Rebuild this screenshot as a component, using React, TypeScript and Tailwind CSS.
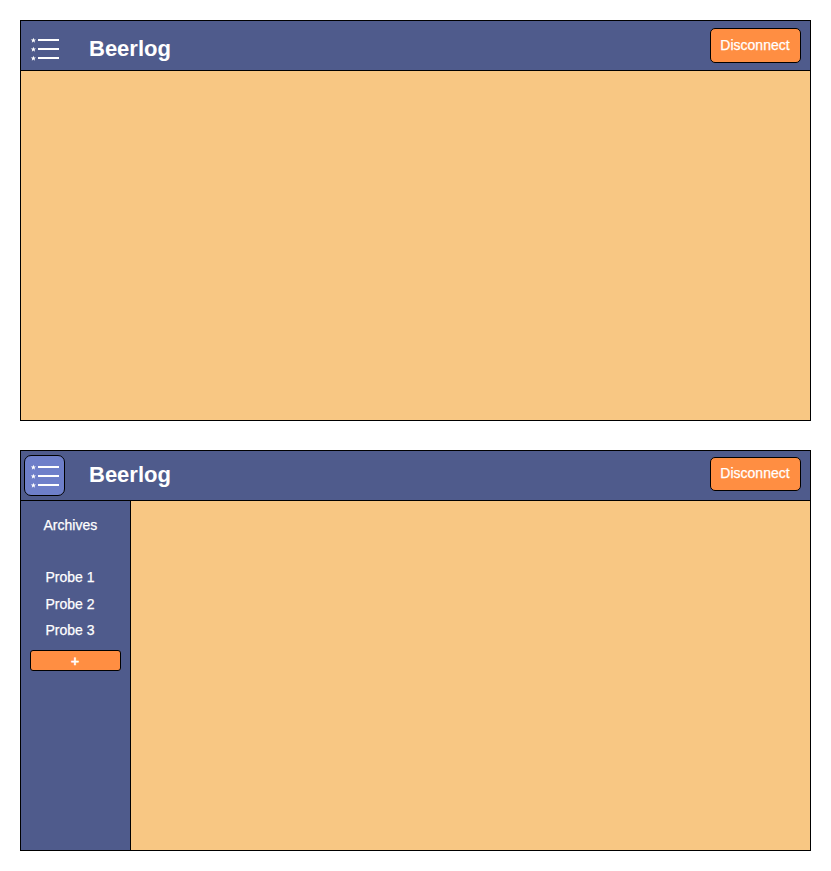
import React from "react";

const STAR = "M0 -2.7 L0.7 -0.85 L2.6 -0.8 L1.1 0.4 L1.6 2.3 L0 1.2 L-1.6 2.3 L-1.1 0.4 L-2.6 -0.8 L-0.7 -0.85 Z";

function ListIcon() {
  return (
    <svg width="29" height="25" viewBox="0 0 29 25" className="block shrink-0" fill="white" aria-hidden="true">
      {[3, 12, 21].map((y) => (
        <g key={y}>
          <path d={STAR} transform={`translate(3.4 ${y + 0.4})`} />
          <rect x="8" y={y - 1} width="21" height="2" />
        </g>
      ))}
    </svg>
  );
}

function MenuButton({ active = false }: { active?: boolean }) {
  return (
    <button
      aria-label="Menu"
      className={`mt-1 ml-[3px] flex h-[41px] w-[41px] items-start rounded-[7px] border pl-[5px] ${
        active ? "border-black bg-[#6e7fc9] pt-[7.5px]" : "border-transparent pt-[11px]"
      }`}
    >
      <ListIcon />
    </button>
  );
}

function Header({ open = false }: { open?: boolean }) {
  return (
    <header className="flex h-[50px] shrink-0 items-start border-b border-black bg-[#4f5b8c]">
      <MenuButton active={open} />
      <h1 className={`ml-6 text-[22px] leading-[26px] font-bold ${open ? "mt-[11px]" : "mt-[15px]"}`}>Beerlog</h1>
      <button
        className={`mr-[9px] ml-auto w-[91px] rounded-[5px] border border-black bg-[#ff8e42] pr-px pb-[2px] text-sm leading-4 [-webkit-text-stroke:0.25px_white] ${
          open ? "mt-[6px] h-[34px]" : "mt-[7px] h-[35px]"
        }`}
      >
        Disconnect
      </button>
    </header>
  );
}

function Sidebar() {
  return (
    <aside className="flex w-[110px] shrink-0 flex-col border-r border-black bg-[#4f5b8c] pt-4 text-sm leading-4 [-webkit-text-stroke:0.25px_white]">
      <h2 className="ml-[22.5px]">Archives</h2>
      <ul className="mt-9 ml-[24.5px]">
        <li>Probe 1</li>
        <li className="mt-[11px]">Probe 2</li>
        <li className="mt-[10px]">Probe 3</li>
      </ul>
      <button className="mt-3 ml-[9px] h-[21px] w-[91px] rounded-[3px] border border-black bg-[#ff8e42] pr-px [-webkit-text-stroke:0.6px_white]">
        +
      </button>
    </aside>
  );
}

function Screen({ open = false }: { open?: boolean }) {
  return (
    <section className="flex h-[401px] w-[791px] flex-col border border-black">
      <Header open={open} />
      <div className="flex flex-1">
        {open && <Sidebar />}
        <main className="flex-1 bg-[#f8c783]" />
      </div>
    </section>
  );
}

export default function App() {
  return (
    <div className="flex h-[871px] w-[831px] flex-col gap-[29px] bg-white p-5 font-['Liberation_Sans',Arial,sans-serif] text-white">
      <Screen />
      <Screen open />
    </div>
  );
}
